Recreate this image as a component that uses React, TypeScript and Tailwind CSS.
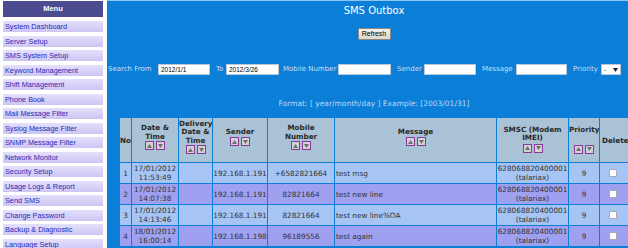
import React from "react";

const menu = [
  "System Dashboard",
  "Server Setup",
  "SMS System Setup",
  "Keyword Management",
  "Shift Management",
  "Phone Book",
  "Mail Message Filter",
  "Syslog Message Filter",
  "SNMP Message Filter",
  "Network Monitor",
  "Security Setup",
  "Usage Logs & Report",
  "Send SMS",
  "Change Password",
  "Backup & Diagnostic",
  "Language Setup",
];

const rows = [
  { no: 1, date: "17/01/2012", time: "11:53:49", ip: "192.168.1.191", mobile: "+6582821664", msg: "test msg" },
  { no: 2, date: "17/01/2012", time: "14:07:38", ip: "192.168.1.191", mobile: "82821664", msg: "test new line" },
  { no: 3, date: "17/01/2012", time: "14:13:46", ip: "192.168.1.191", mobile: "82821664", msg: "test new line%OA" },
  { no: 4, date: "18/01/2012", time: "16:00:14", ip: "192.168.1.198", mobile: "96189556", msg: "test again" },
];

function Btn({ up }: { up?: boolean }) {
  return (
    <span className="w-[9px] h-[9px] border border-[#8a3a9c] bg-[#d2d2d2] flex items-center justify-center">
      <svg width="5" height="4" viewBox="0 0 5 4">
        {up ? (
          <polygon points="0,4 2.5,0 5,4" fill="#6e6e6e" />
        ) : (
          <polygon points="0,0 5,0 2.5,4" fill="#6e6e6e" />
        )}
      </svg>
    </span>
  );
}

function Sort({ className = "" }: { className?: string }) {
  return (
    <div className={"flex justify-center gap-[2px] " + className}>
      <Btn up />
      <Btn />
    </div>
  );
}

function Field({
  label,
  value,
  lw,
  w = "w-[52px]",
  after = "mr-[6px]",
}: {
  label: string;
  value?: string;
  lw: string;
  w?: string;
  after?: string;
}) {
  return (
    <div className={"flex items-center " + after}>
      <span className={lw + " shrink-0"}>{label}</span>
      <span
        className={
          w +
          " shrink-0 h-[11px] bg-white border border-[#b8c8d8] text-black text-[6.5px] leading-[9px] pl-[2px] [font-family:'Liberation_Sans',sans-serif]"
        }
      >
        {value}
      </span>
    </div>
  );
}

export default function App() {
  return (
    <div className="w-[628px] h-[248px] overflow-hidden flex bg-white">
      <aside className="w-[107px] shrink-0 pl-[3px] pr-[4px] pt-[1px] bg-white [font-family:'Liberation_Sans',Arial,sans-serif]">
        <div className="h-[16px] bg-[#4b4b8f] text-white font-bold text-[7.5px] flex items-center justify-center">
          Menu
        </div>
        <ul className="mt-[4px] flex flex-col gap-[3.5px]">
          {menu.map((m) => (
            <li
              key={m}
              className="h-[11px] pl-[2px] text-[7.3px] leading-[11px] text-[#2a2ab5] bg-gradient-to-b from-[#e4e0fb] to-[#cdc6f4] whitespace-nowrap overflow-hidden"
            >
              {m}
            </li>
          ))}
        </ul>
      </aside>

      <main className="w-[534px] shrink-0 bg-[#0b7fd7] border-t border-[#8cc6f0] flex flex-col [font-family:'DejaVu_Sans',Verdana,sans-serif]">
        <div className="mt-[4px] h-[12px] text-center text-white text-[10px] leading-[12px]">SMS Outbox</div>
        <div className="mt-[11px] flex justify-center">
          <span className="w-[33px] h-[12px] bg-gradient-to-b from-[#f4f2ec] to-[#dcd8cc] border border-[#8a8a8a] rounded-[1px] text-black text-[7px] leading-[10px] text-center [font-family:'Liberation_Sans',sans-serif]">
            Refresh
          </span>
        </div>
        <div className="mt-[24px] pl-[1px] flex items-center text-[7px] text-[#cddcf6] whitespace-nowrap">
          <Field label="Search From" value="2012/1/1" lw="w-[50px]" />
          <Field label="To" value="2012/3/26" lw="w-[10px]" w="w-[53px]" after="mr-[4px]" />
          <Field label="Mobile Number" lw="w-[55px]" w="w-[53px]" />
          <Field label="Sender" lw="w-[27px]" />
          <Field label="Message" lw="w-[34px]" w="w-[51px]" />
          <div className="flex items-center">
            <span className="w-[28px] shrink-0">Priority</span>
            <span className="w-[20px] h-[11px] bg-white border border-[#b8c8d8] flex items-center justify-between px-[2px] text-black text-[6px] leading-[9px]">
              <span>-</span>
              <svg width="5" height="4" viewBox="0 0 5 4">
                <polygon points="0,0 5,0 2.5,4" fill="#222" />
              </svg>
            </span>
          </div>
        </div>
        <div className="mt-[24px] h-[10px] text-center text-[7.5px] leading-[10px] text-[#bcd6f8] whitespace-nowrap">
          Format: [ year/month/day ] Example: [2003/01/31]
        </div>

        <table className="mt-[8px] ml-[12px] table-fixed border-separate border-spacing-[1px] w-[516px] text-[#333]">
          <colgroup>
            <col className="w-[11px]" />
            <col className="w-[46px]" />
            <col className="w-[33px]" />
            <col className="w-[54px]" />
            <col className="w-[66px]" />
            <col className="w-[161px]" />
            <col className="w-[71px]" />
            <col className="w-[30px]" />
            <col className="w-[35px]" />
          </colgroup>
          <thead>
            <tr className="h-[44px] bg-[#a9c2d6] text-[7.2px] leading-[8.5px] font-bold text-[#2a2a2a]">
              <th className="align-middle pt-[3px]">No</th>
              <th className="align-middle pb-[6px] px-[1px]">
                <div>Date &amp;</div>
                <div>Time</div>
                <Sort />
              </th>
              <th className="align-middle pb-[6px] px-0">
                <div>Delivery</div>
                <div>Date &amp;</div>
                <div>Time</div>
                <Sort />
              </th>
              <th className="align-middle pb-[6px]">
                <div>Sender</div>
                <Sort className="mt-[1px]" />
              </th>
              <th className="align-middle pb-[6px]">
                <div>Mobile</div>
                <div>Number</div>
                <Sort />
              </th>
              <th className="align-middle pb-[6px]">
                <div>Message</div>
                <Sort className="mt-[1px]" />
              </th>
              <th className="align-middle pb-[2px]">
                <div>SMSC (Modem</div>
                <div>IMEI)</div>
                <Sort className="mt-[1px]" />
              </th>
              <th className="align-middle">
                <div className="mb-[10px]">Priority</div>
                <Sort />
              </th>
              <th className="align-middle text-left pl-[2px] pt-[3px]">Delete</th>
            </tr>
          </thead>
          <tbody className="text-[7.3px] leading-[9px]">
            {rows.map((r, i) => (
              <tr key={r.no} className={"h-[20px] " + (i % 2 === 0 ? "bg-[#a6c4f4]" : "bg-[#9fa0f0]")}>
                <td className="text-center align-middle">{r.no}</td>
                <td className="text-center align-middle whitespace-nowrap">
                  <div>{r.date}</div>
                  <div>{r.time}</div>
                </td>
                <td></td>
                <td className="text-center align-middle whitespace-nowrap">{r.ip}</td>
                <td className="text-center align-middle whitespace-nowrap">{r.mobile}</td>
                <td className="text-left align-middle pl-[1px] whitespace-nowrap">{r.msg}</td>
                <td className="text-center align-middle whitespace-nowrap">
                  <div>628068820400001</div>
                  <div>(talariax)</div>
                </td>
                <td className="text-center align-middle">9</td>
                <td className="align-middle">
                  <div className="ml-[9px] w-[8px] h-[8px] bg-white border border-[#a8a8b8] rounded-[1px]" />
                </td>
              </tr>
            ))}
          </tbody>
        </table>
      </main>
    </div>
  );
}
